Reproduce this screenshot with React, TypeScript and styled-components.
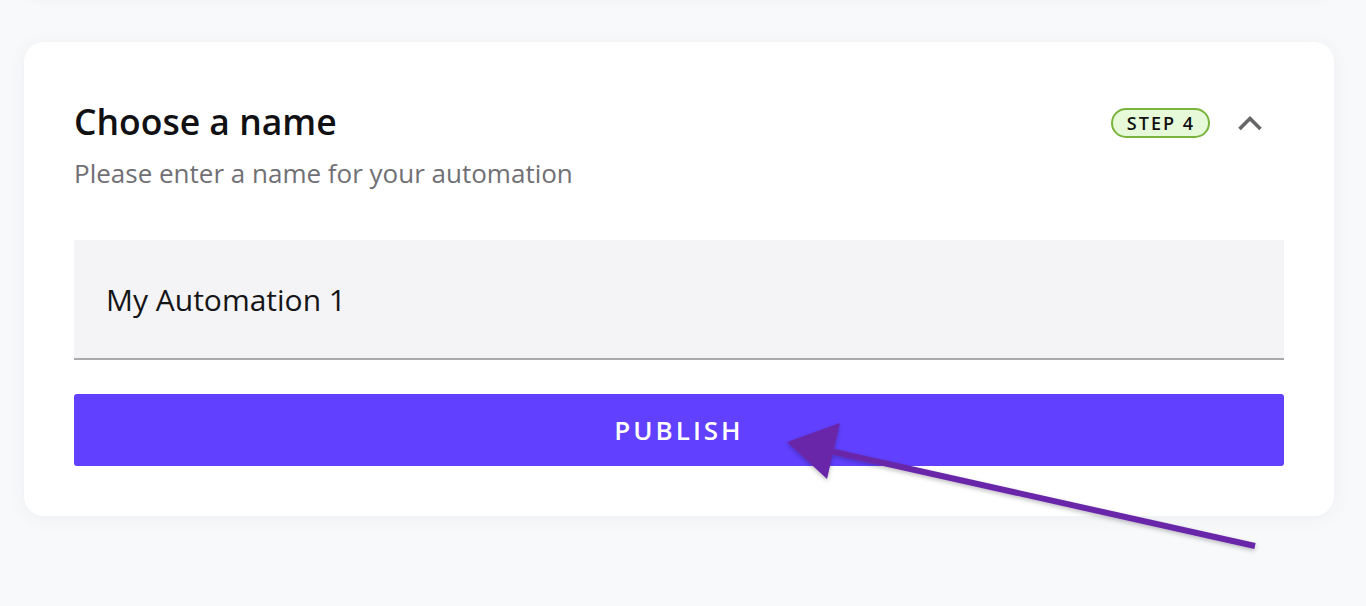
import React, { useState } from 'react';
import styled, { createGlobalStyle } from 'styled-components';

const GlobalStyle = createGlobalStyle`
  html, body {
    margin: 0;
    padding: 0;
    background: #f8f9fb;
    font-family: 'Open Sans', 'Noto Sans', sans-serif;
    overflow: hidden;
  }
`;

const Page = styled.div`
  position: relative;
  width: 1366px;
  height: 606px;
  padding: 0 32px 0 24px;
  box-sizing: border-box;
  display: flex;
  flex-direction: column;
  gap: 52px;
`;

const Card = styled.section<{ $ghost?: boolean }>`
  background: #ffffff;
  border-radius: 20px;
  box-shadow: ${(p) =>
    p.$ghost ? '0 4px 16px rgba(40, 60, 90, 0.1)' : '0 2px 18px rgba(40, 60, 90, 0.06)'};
  margin-top: ${(p) => (p.$ghost ? '-100px' : '0')};
  height: ${(p) => (p.$ghost ? '90px' : 'auto')};
  padding: ${(p) => (p.$ghost ? '0' : '56px 50px 50px 50px')};
  box-sizing: border-box;
  background: ${(p) => (p.$ghost ? '#f4f6f7' : '#ffffff')};
`;

const Header = styled.div`
  display: flex;
  align-items: flex-start;
  justify-content: space-between;
`;

const Titles = styled.div`
  display: flex;
  flex-direction: column;
  gap: 12px;
`;

const Title = styled.h2`
  margin: 0;
  font-size: 35.5px;
  line-height: 46px;
  font-weight: 600;
  color: #111114;
`;

const Subtitle = styled.p`
  margin: 0;
  font-size: 26px;
  line-height: 34px;
  color: #707074;
`;

const Controls = styled.div`
  display: flex;
  align-items: center;
  gap: 24px;
  margin-top: 10px;
  margin-right: 18px;
`;

const StepBadge = styled.span`
  display: inline-flex;
  align-items: center;
  justify-content: center;
  height: 30px;
  padding: 0 13px 0 14px;
  box-sizing: border-box;
  border: 2px solid #7ab43c;
  border-radius: 15px;
  background: #e6f9d8;
  font-size: 18px;
  font-weight: 600;
  letter-spacing: 2px;
  color: #111;
`;

const ToggleButton = styled.button`
  border: 0;
  background: none;
  padding: 0;
  width: 32px;
  height: 28px;
  display: flex;
  align-items: center;
  justify-content: center;
  color: #666669;
  cursor: pointer;
`;

const NameInput = styled.input`
  display: block;
  width: 100%;
  height: 120px;
  margin-top: 50px;
  padding: 0 32px;
  box-sizing: border-box;
  border: 0;
  border-bottom: 2px solid #a9a9ab;
  background: #f4f4f6;
  font-family: inherit;
  font-size: 30px;
  color: #151517;
  outline: none;
`;

const PublishButton = styled.button`
  display: block;
  width: 100%;
  height: 72px;
  margin-top: 34px;
  border: 0;
  border-radius: 3px;
  background: #6140ff;
  color: #ffffff;
  font-family: inherit;
  font-size: 26px;
  font-weight: 600;
  letter-spacing: 3px;
  cursor: pointer;
`;

const Annotation = styled.svg`
  position: absolute;
  left: 0;
  top: 0;
  pointer-events: none;
`;

const ChevronUp = () => (
  <svg width="26" height="16" viewBox="0 0 26 16" fill="none">
    <path d="M2.5 14 L13 3.5 L23.5 14" stroke="currentColor" strokeWidth="3.6" />
  </svg>
);

export default function App() {
  const [name, setName] = useState('My Automation 1');
  const [open, setOpen] = useState(true);

  return (
    <>
      <GlobalStyle />
      <Page>
        <Card $ghost />
        <Card>
          <Header>
            <Titles>
              <Title>Choose a name</Title>
              <Subtitle>Please enter a name for your automation</Subtitle>
            </Titles>
            <Controls>
              <StepBadge>STEP 4</StepBadge>
              <ToggleButton onClick={() => setOpen(!open)} aria-label="Collapse">
                <ChevronUp />
              </ToggleButton>
            </Controls>
          </Header>
          <NameInput value={name} onChange={(e) => setName(e.target.value)} />
          <PublishButton>PUBLISH</PublishButton>
        </Card>
        <Annotation width="1366" height="606" viewBox="0 0 1366 606">
          <defs>
            <filter id="arrowShadow" x="-10%" y="-10%" width="120%" height="130%">
              <feDropShadow dx="0" dy="2" stdDeviation="2" floodColor="#000" floodOpacity="0.25" />
            </filter>
          </defs>
          <g filter="url(#arrowShadow)" fill="#6a28a8">
            <line x1="1255" y1="546" x2="830" y2="451" stroke="#6a28a8" strokeWidth="6" />
            <polygon points="787,442 840,423 827,479" />
          </g>
        </Annotation>
      </Page>
    </>
  );
}
